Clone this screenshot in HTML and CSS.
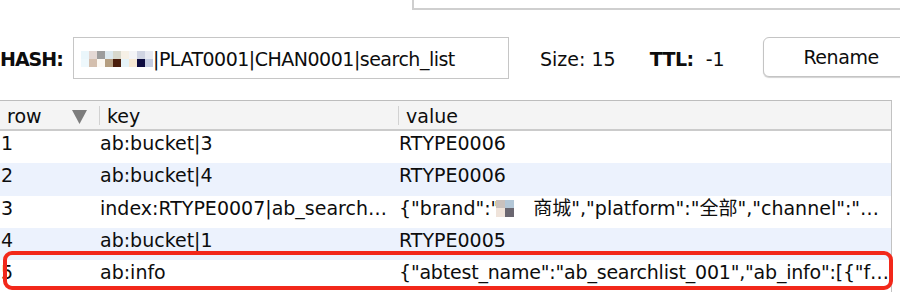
FILE: index.html
```html
<!DOCTYPE html>
<html>
<head>
<meta charset="utf-8">
<link rel="stylesheet" href="styles.css">
</head>
<body>
<div class="page">
  <div class="topbar"><div class="topbox"></div></div>

  <div class="toolbar">
    <span class="label">HASH:</span>
    <div class="keyfield">
      <svg class="mosaic" width="72" height="16" viewBox="0 0 72 16" shape-rendering="crispEdges">
        <rect x="0" y="0" width="8" height="8" fill="#eaf6fb"/>
        <rect x="8" y="0" width="8" height="8" fill="#e4d8d4"/>
        <rect x="16" y="0" width="8" height="8" fill="#9c9c9c"/>
        <rect x="24" y="0" width="8" height="8" fill="#dde9ef"/>
        <rect x="32" y="0" width="8" height="8" fill="#d8d8cc"/>
        <rect x="40" y="0" width="8" height="8" fill="#f6f0e6"/>
        <rect x="48" y="0" width="8" height="8" fill="#f4f4f6"/>
        <rect x="56" y="0" width="8" height="8" fill="#d0d4e2"/>
        <rect x="64" y="0" width="8" height="8" fill="#e8eaf2"/>
        <rect x="0" y="8" width="8" height="8" fill="#eef8fc"/>
        <rect x="8" y="8" width="8" height="8" fill="#d4bfae"/>
        <rect x="16" y="8" width="8" height="8" fill="#fcf8f2"/>
        <rect x="24" y="8" width="8" height="8" fill="#b59e80"/>
        <rect x="32" y="8" width="8" height="8" fill="#4b1e0c"/>
        <rect x="40" y="8" width="8" height="8" fill="#e6f3f8"/>
        <rect x="48" y="8" width="8" height="8" fill="#f6e8d4"/>
        <rect x="56" y="8" width="8" height="8" fill="#0e0c40"/>
        <rect x="64" y="8" width="8" height="8" fill="#c4cce0"/>
      </svg>
      <span class="keytext">|PLAT0001|CHAN0001|search_list</span>
    </div>
    <span class="stat size">Size: 15</span>
    <span class="stat ttl-label">TTL:</span>
    <span class="stat ttl">-1</span>
    <button class="btn">Rename</button>
  </div>

  <div class="table">
    <div class="thead">
      <div class="th th-row"><span>row</span>
        <svg class="sort" width="15" height="14" viewBox="0 0 15 14"><polygon points="0,0 15,0 7.5,14" fill="#7d7d7d"/></svg>
      </div>
      <div class="th th-sep">key</div>
      <div class="th th-sep">value</div>
    </div>

    <div class="tr">
      <div class="td num">1</div>
      <div class="td">ab:bucket|3</div>
      <div class="td">RTYPE0006</div>
    </div>
    <div class="tr alt">
      <div class="td num">2</div>
      <div class="td">ab:bucket|4</div>
      <div class="td">RTYPE0006</div>
    </div>
    <div class="tr">
      <div class="td num">3</div>
      <div class="td">index:RTYPE0007|ab_search…</div>
      <div class="td">{"brand":"<svg class="mosaic2" width="18" height="17" viewBox="0 0 18 17" shape-rendering="crispEdges">
          <rect x="0" y="0" width="9" height="8" fill="#c9c1bd"/>
          <rect x="9" y="0" width="9" height="8" fill="#b3c7d7"/>
          <rect x="0" y="8" width="9" height="9" fill="#efe3da"/>
          <rect x="9" y="8" width="9" height="9" fill="#6a6670"/>
        </svg>商城","platform":"全部","channel":"…</div>
    </div>
    <div class="tr alt">
      <div class="td num">4</div>
      <div class="td">ab:bucket|1</div>
      <div class="td">RTYPE0005</div>
    </div>
    <div class="tr">
      <div class="td num">5</div>
      <div class="td">ab:info</div>
      <div class="td tight">{"abtest_name":"ab_searchlist_001","ab_info":[{"f…</div>
    </div>
  </div>

  <div class="highlight"></div>
</div>
</body>
</html>
```

FILE: styles.css
```css
html, body {
  margin: 0;
  padding: 0;
  background: #ffffff;
}

body {
  width: 900px;
  height: 292px;
  overflow: hidden;
  font-family: "DejaVu Sans", "Noto Sans CJK SC", sans-serif;
  font-size: 19px;
  color: #0d0d0d;
}

.page {
  position: relative;
  width: 900px;
  height: 292px;
}

/* top strip */
.topbar {
  height: 10px;
  display: flex;
}

.topbox {
  margin-left: 412px;
  flex: 1;
  height: 8px;
  border-left: 2px solid #cfcfcf;
  border-bottom: 2px solid #cfcfcf;
}

/* toolbar */
.toolbar {
  margin-top: 27px;
  height: 42px;
  display: flex;
  align-items: stretch;
  white-space: nowrap;
}

.label {
  flex: none;
  width: 73px;
  font-weight: bold;
  letter-spacing: -1px;
  line-height: 42px;
  padding-top: 1px;
  box-sizing: border-box;
}

.keyfield {
  flex: none;
  width: 436px;
  height: 42px;
  box-sizing: border-box;
  border: 1px solid #c6c6c6;
  padding-left: 7px;
  display: flex;
  align-items: center;
  overflow: hidden;
}

.mosaic {
  flex: none;
  display: block;
  margin-top: 2px;
}

.keytext {
  line-height: 22px;
  padding-top: 2px;
  letter-spacing: -0.5px;
}

.stat {
  flex: none;
  line-height: 42px;
  padding-top: 1px;
  box-sizing: border-box;
}

.size { margin-left: 31px; }

.ttl-label {
  margin-left: 34px;
  font-weight: bold;
  letter-spacing: -0.5px;
}

.ttl { margin-left: 12px; }

.btn {
  flex: none;
  margin-left: 38px;
  width: 157px;
  height: 40px;
  box-sizing: border-box;
  border: 1px solid #c4c4c4;
  border-radius: 6px;
  background: #ffffff;
  box-shadow: 0 1px 1px rgba(0, 0, 0, 0.18);
  font-family: "DejaVu Sans", sans-serif;
  font-size: 19px;
  letter-spacing: -0.4px;
  color: #0d0d0d;
  line-height: 38px;
  padding: 0;
  text-align: center;
}

/* table */
.table {
  margin-top: 21px;
  width: 892px;
  box-sizing: border-box;
  border-top: 1px solid #bdbdbd;
  border-right: 1px solid #c2c2c2;
}

.thead {
  display: grid;
  grid-template-columns: 99px 299px 1fr;
  height: 28px;
  background: #f4f4f4;
  border-bottom: 2px solid #cbcbcb;
}

.th {
  line-height: 28px;
  padding-left: 7px;
  padding-top: 1px;
  box-sizing: border-box;
  white-space: nowrap;
}

.th-row {
  display: flex;
  justify-content: space-between;
  padding-right: 12px;
}

.sort {
  flex: none;
  margin-top: 8px;
}

.th-sep {
  background-image: linear-gradient(#d2d2d2, #d2d2d2);
  background-repeat: no-repeat;
  background-position: 0 5px;
  background-size: 1px 19px;
  padding-left: 8px;
}

.tr {
  display: grid;
  grid-template-columns: 99px 299px 1fr;
  height: 32.3px;
  background: #ffffff;
}

.tr.alt {
  background: #ecf2fd;
}

.td {
  line-height: 24px;
  padding-left: 1px;
  white-space: nowrap;
  overflow: hidden;
}

.num {
  padding-left: 1px;
}

.mosaic2 {
  display: inline-block;
  vertical-align: -2px;
  margin-left: -3px;
  margin-right: 19px;
}

.tight {
  letter-spacing: -0.2px;
}

/* annotation overlay */
.highlight {
  position: absolute;
  left: 3px;
  top: 251px;
  width: 890px;
  height: 39px;
  box-sizing: border-box;
  border: 4px solid #f2281a;
  border-radius: 9px;
}
```
